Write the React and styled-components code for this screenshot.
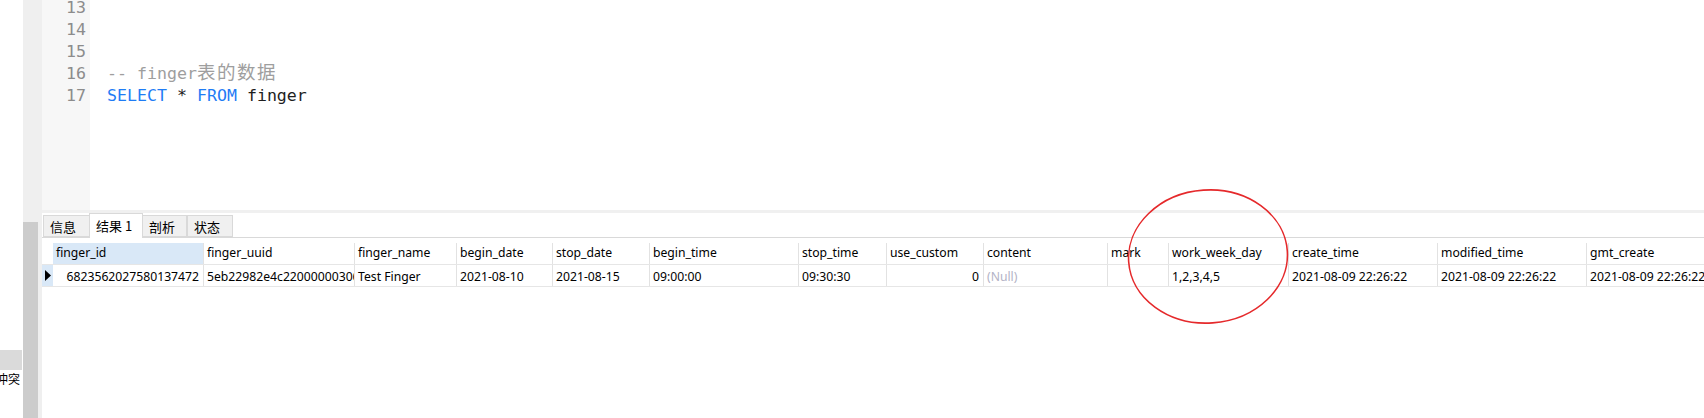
import React from "react";
import styled, { createGlobalStyle } from "styled-components";

const Global = createGlobalStyle`
  html, body { margin: 0; padding: 0; background: #ffffff; overflow: hidden; }
  #root { width: 1704px; height: 418px; }
`;

const Frame = styled.div`
  position: relative;
  display: flex;
  width: 1704px;
  height: 418px;
  overflow: hidden;
  background: #ffffff;
  font-family: "Noto Sans", "Noto Sans CJK SC", sans-serif;
`;

const LeftStrip = styled.div`
  width: 23px;
  flex: none;
  display: flex;
  flex-direction: column;
  padding-top: 350px;
  box-sizing: border-box;
  overflow: hidden;
`;

const StripBox = styled.div`
  width: 22px;
  height: 20px;
  background: #dadada;
`;

const StripLabel = styled.div`
  margin-top: 2px;
  margin-left: -4px;
  font-family: "Noto Sans CJK SC", sans-serif;
  font-size: 12px;
  line-height: 14px;
  color: #000;
  white-space: nowrap;
`;

const Rail = styled.div`
  width: 19px;
  flex: none;
  background: #efefef;
  display: flex;
  flex-direction: column;
`;

const RailBar = styled.div`
  margin-top: 222px;
  width: 15px;
  flex: 1;
  background: #cccccc;
`;

const Main = styled.div`
  flex: 1;
  min-width: 0;
  display: flex;
  flex-direction: column;
  overflow: hidden;
`;

const Editor = styled.div`
  height: 210px;
  flex: none;
  display: flex;
  overflow: hidden;
  font-family: "DejaVu Sans Mono", monospace;
  font-size: 16.6px;
  line-height: 22px;
`;

const Gutter = styled.div`
  width: 48px;
  flex: none;
  background: #f7f7f7;
  box-sizing: border-box;
  padding-right: 4px;
  text-align: right;
  color: #8c8c8c;
`;

const Lines = styled.div`
  margin-top: -3px;
`;

const Line = styled.div`
  height: 22px;
`;

const Code = styled.div`
  flex: 1;
  padding-left: 17px;
  white-space: pre;
  color: #1e1e1e;
`;

const Tok = styled.span`
  color: ${(p) => p.$c};
`;

const Wide = styled.span`
  font-family: "Noto Sans CJK SC", sans-serif;
  font-size: 18.5px;
  line-height: 0;
  letter-spacing: 1.5px;
`;

const Band = styled.div`
  height: 3px;
  flex: none;
  background: #f0f0f0;
`;

const TabBar = styled.div`
  height: 25px;
  flex: none;
  display: flex;
  align-items: flex-end;
  padding-left: 1px;
  box-sizing: border-box;
  border-bottom: 1px solid #d9d9d9;
`;

const Tab = styled.div`
  box-sizing: border-box;
  width: ${(p) => p.$w}px;
  height: ${(p) => (p.$active ? 25 : 22)}px;
  margin-bottom: ${(p) => (p.$active ? -1 : 0)}px;
  background: ${(p) => (p.$active ? "#ffffff" : "#f0f0f0")};
  border: 1px solid #d9d9d9;
  border-bottom: ${(p) => (p.$active ? "none" : "1px solid #d9d9d9")};
  margin-left: ${(p) => (p.$active ? -1 : 0)}px;
  margin-right: ${(p) => (p.$active ? -1 : 0)}px;
  position: relative;
  z-index: ${(p) => (p.$active ? 1 : 0)};
  padding: ${(p) => (p.$active ? "3px 0 0 6px" : "2px 0 0 6px")};
  font-family: "Noto Sans CJK SC", sans-serif;
  font-size: 13px;
  line-height: 17px;
  color: #000;
  white-space: nowrap;
`;

const Grid = styled.div`
  margin-top: 5px;
  display: flex;
  flex-direction: column;
  font-size: 12.2px;
  color: #000;
`;

const Row = styled.div`
  display: flex;
  height: 22px;
  box-sizing: border-box;
  border-bottom: 1px solid #e6e6e6;
`;

const Indicator = styled.div`
  width: 11px;
  flex: none;
  background: ${(p) => (p.$sel ? "#d9e8f7" : "#ffffff")};
  display: flex;
  align-items: center;
  padding-left: 3px;
  box-sizing: border-box;
`;

const Cell = styled.div`
  width: ${(p) => p.$w}px;
  flex: none;
  box-sizing: border-box;
  border-right: 1px solid #e2e2e2;
  padding: ${(p) => (p.$head ? "2px" : "4px")} 4px 0 3px;
  line-height: 16px;
  overflow: hidden;
  white-space: nowrap;
  text-align: ${(p) => (p.$right ? "right" : "left")};
  background: ${(p) => (p.$hl ? "#d9e8f7" : "transparent")};
  color: ${(p) => (p.$null ? "#b3b3c6" : "#000")};
`;

const Ring = styled.svg`
  position: absolute;
  left: 1124px;
  top: 186px;
  pointer-events: none;
`;

const columns = [
  { name: "finger_id", w: 151, v: "6823562027580137472", right: true, hl: true },
  { name: "finger_uuid", w: 151, v: "5eb22982e4c22000000306" },
  { name: "finger_name", w: 102, v: "Test Finger" },
  { name: "begin_date", w: 96, v: "2021-08-10" },
  { name: "stop_date", w: 97, v: "2021-08-15" },
  { name: "begin_time", w: 149, v: "09:00:00" },
  { name: "stop_time", w: 88, v: "09:30:30" },
  { name: "use_custom", w: 97, v: "0", right: true },
  { name: "content", w: 124, v: "(Null)", nul: true },
  { name: "mark", w: 61, v: "" },
  { name: "work_week_day", w: 120, v: "1,2,3,4,5" },
  { name: "create_time", w: 149, v: "2021-08-09 22:26:22" },
  { name: "modified_time", w: 149, v: "2021-08-09 22:26:22" },
  { name: "gmt_create", w: 200, v: "2021-08-09 22:26:22" },
];

const tabs = [
  { label: "信息", w: 47 },
  { label: "结果 1", w: 54, active: true },
  { label: "剖析", w: 45 },
  { label: "状态", w: 46 },
];

export default function App() {
  return (
    <>
      <Global />
      <Frame>
        <LeftStrip>
          <StripBox />
          <StripLabel>冲突</StripLabel>
        </LeftStrip>
        <Rail>
          <RailBar />
        </Rail>
        <Main>
          <Editor>
            <Gutter>
              <Lines>
                <Line>13</Line>
                <Line>14</Line>
                <Line>15</Line>
                <Line>16</Line>
                <Line>17</Line>
              </Lines>
            </Gutter>
            <Code>
              <Lines>
                <Line> </Line>
                <Line> </Line>
                <Line> </Line>
                <Line>
                  <Tok $c="#9e9e9e">
                    -- finger<Wide>表的数据</Wide>
                  </Tok>
                </Line>
                <Line>
                  <Tok $c="#1f7cf5">SELECT</Tok> * <Tok $c="#1f7cf5">FROM</Tok> finger
                </Line>
              </Lines>
            </Code>
          </Editor>
          <Band />
          <TabBar>
            {tabs.map((t) => (
              <Tab key={t.label} $w={t.w} $active={t.active}>
                {t.label}
              </Tab>
            ))}
          </TabBar>
          <Grid>
            <Row>
              <Indicator />
              {columns.map((c) => (
                <Cell key={c.name} $w={c.w} $head $hl={c.hl}>
                  {c.name}
                </Cell>
              ))}
            </Row>
            <Row>
              <Indicator $sel>
                <svg width="6" height="11" viewBox="0 0 6 11">
                  <path d="M0 0 L6 5.5 L0 11 Z" fill="#000" />
                </svg>
              </Indicator>
              {columns.map((c) => (
                <Cell key={c.name} $w={c.w} $right={c.right} $null={c.nul}>
                  {c.v}
                </Cell>
              ))}
            </Row>
          </Grid>
        </Main>
        <Ring width="170" height="142" viewBox="0 0 170 142">
          <ellipse
            cx="84"
            cy="70.5"
            rx="79.5"
            ry="66.5"
            fill="none"
            stroke="#e5292b"
            strokeWidth="1.6"
            transform="rotate(-4 84 70.5)"
          />
        </Ring>
      </Frame>
    </>
  );
}
